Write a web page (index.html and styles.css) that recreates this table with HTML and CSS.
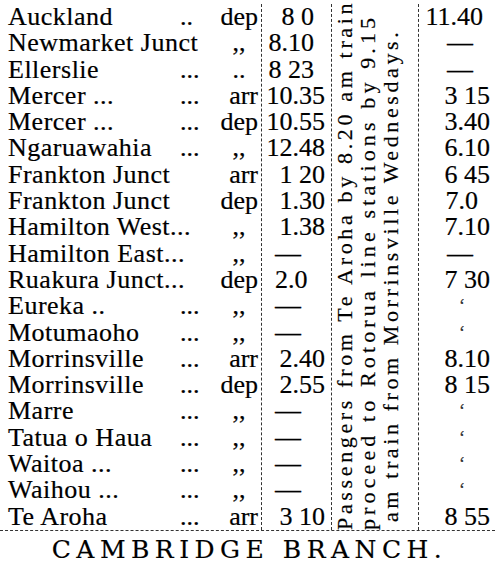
FILE: index.html
```html
<!DOCTYPE html>
<html lang="en">
<head>
<meta charset="utf-8">
<title>Timetable</title>
<link rel="stylesheet" href="styles.css">
</head>
<body>
<div class="page">
  <div class="table">
    <div class="stations">
      <div class="row"><span class="name">Auckland</span><span class="dots">..</span><span class="lab">dep</span></div>
      <div class="row"><span class="name wide">Newmarket Junct</span><span class="lab ditto">,,</span></div>
      <div class="row"><span class="name">Ellerslie</span><span class="dots">...</span><span class="lab ditto">..</span></div>
      <div class="row"><span class="name">Mercer ...</span><span class="dots">...</span><span class="lab">arr</span></div>
      <div class="row"><span class="name">Mercer ...</span><span class="dots">...</span><span class="lab">dep</span></div>
      <div class="row"><span class="name">Ngaruawahia</span><span class="dots">...</span><span class="lab ditto">,,</span></div>
      <div class="row"><span class="name">Frankton Junct</span><span class="dots"></span><span class="lab">arr</span></div>
      <div class="row"><span class="name">Frankton Junct</span><span class="dots"></span><span class="lab">dep</span></div>
      <div class="row"><span class="name">Hamilton West...</span><span class="dots"></span><span class="lab ditto">,,</span></div>
      <div class="row"><span class="name">Hamilton East...</span><span class="dots"></span><span class="lab ditto">,,</span></div>
      <div class="row"><span class="name wide">Ruakura Junct...</span><span class="lab">dep</span></div>
      <div class="row"><span class="name">Eureka ..</span><span class="dots">...</span><span class="lab ditto">,,</span></div>
      <div class="row"><span class="name">Motumaoho</span><span class="dots">...</span><span class="lab ditto">,,</span></div>
      <div class="row"><span class="name">Morrinsville</span><span class="dots">...</span><span class="lab">arr</span></div>
      <div class="row"><span class="name">Morrinsville</span><span class="dots">...</span><span class="lab">dep</span></div>
      <div class="row"><span class="name">Marre</span><span class="dots">...</span><span class="lab ditto">,,</span></div>
      <div class="row"><span class="name">Tatua o Haua</span><span class="dots">...</span><span class="lab ditto">,,</span></div>
      <div class="row"><span class="name">Waitoa ...</span><span class="dots">...</span><span class="lab ditto">,,</span></div>
      <div class="row"><span class="name">Waihou ...</span><span class="dots">...</span><span class="lab ditto">,,</span></div>
      <div class="row"><span class="name">Te Aroha</span><span class="dots">...</span><span class="lab">arr</span></div>
    </div>
    <div class="times">
      <div class="cell shift">8 0</div>
      <div class="cell shift">8.10</div>
      <div class="cell shift">8 23</div>
      <div class="cell">10.35</div>
      <div class="cell">10.55</div>
      <div class="cell">12.48</div>
      <div class="cell">1 20</div>
      <div class="cell">1.30</div>
      <div class="cell">1.38</div>
      <div class="cell left">—</div>
      <div class="cell left">2.0</div>
      <div class="cell left">—</div>
      <div class="cell left">—</div>
      <div class="cell">2.40</div>
      <div class="cell">2.55</div>
      <div class="cell left">—</div>
      <div class="cell left">—</div>
      <div class="cell left">—</div>
      <div class="cell left">—</div>
      <div class="cell">3 10</div>
    </div>
    <div class="note">
      <div class="note-text">
        <span class="l1">Passengers from Te Aroha by 8.20 am train</span>
        <span class="l2">proceed to Rotorua line stations by 9.15</span>
        <span class="l3">am train from Morrinsville Wednesdays.</span>
      </div>
    </div>
    <div class="times2">
      <div class="cell shift">11.40</div>
      <div class="cell dash">—</div>
      <div class="cell dash">—</div>
      <div class="cell">3 15</div>
      <div class="cell">3.40</div>
      <div class="cell">6.10</div>
      <div class="cell">6 45</div>
      <div class="cell shift2">7.0</div>
      <div class="cell">7.10</div>
      <div class="cell dash">—</div>
      <div class="cell">7 30</div>
      <div class="cell mark">‘</div>
      <div class="cell mark">‘</div>
      <div class="cell">8.10</div>
      <div class="cell">8 15</div>
      <div class="cell mark">ʻ</div>
      <div class="cell mark">‘</div>
      <div class="cell mark">‘</div>
      <div class="cell mark">ʻ</div>
      <div class="cell">8 55</div>
    </div>
  </div>
  <div class="title">CAMBRIDGE BRANCH.</div>
</div>
</body>
</html>
```

FILE: styles.css
```css
html, body {
  margin: 0;
  padding: 0;
  background: #fff;
}

.page {
  width: 495px;
  height: 580px;
  overflow: hidden;
  font-family: "Liberation Serif", "Times New Roman", serif;
  color: #000;
  -webkit-text-stroke: 0.2px #000;
}

.table {
  display: flex;
  padding-top: 4px;
  border-bottom: 1px dashed #333;
}

.stations {
  width: 261px;
  flex: none;
  padding-left: 8px;
  box-sizing: border-box;
}

.row {
  display: grid;
  grid-template-columns: 172px 38px 40px;
  height: 26.3px;
  line-height: 26.3px;
  font-size: 26px;
  white-space: nowrap;
}

.name {
  letter-spacing: 0.5px;
}

.name.wide {
  grid-column: span 2;
}

.dots {
  text-align: left;
}

.lab {
  text-align: right;
  grid-column: 3;
}

.lab.ditto {
  text-align: center;
  padding-left: 2px;
}

.times {
  width: 69px;
  flex: none;
  border-left: 1px dashed #333;
}

.cell {
  height: 26.3px;
  line-height: 26.3px;
  font-size: 26px;
  white-space: nowrap;
  text-align: right;
}

.times .cell {
  padding-right: 6px;
}

.times .cell.shift {
  padding-right: 17px;
}

.times .cell.left {
  text-align: left;
  padding-left: 13px;
}

.note {
  width: 88px;
  flex: none;
  border-left: 1px dashed #333;
  border-right: 1px dashed #333;
  display: flex;
  align-items: flex-start;
  padding-left: 1px;
  box-sizing: border-box;
}

.note-text {
  writing-mode: vertical-rl;
  transform: rotate(180deg);
  height: 526px;
  font-size: 22px;
  line-height: 23px;
  white-space: nowrap;
  overflow: visible;
}

.note-text span {
  display: block;
}

.l1 { letter-spacing: 3.65px; }
.l2 { letter-spacing: 4.12px; }
.l3 { letter-spacing: 3.6px; padding-inline-start: 8px; }

.times2 {
  flex: 1;
}

.times2 .cell {
  padding-right: 5px;
}

.times2 .cell.shift {
  padding-right: 12px;
}

.times2 .cell.shift2 {
  padding-right: 17px;
}

.times2 .cell.dash {
  text-align: left;
  padding-left: 28px;
}

.times2 .cell.mark {
  text-align: left;
  padding-left: 40px;
  font-size: 18px;
  color: #333;
}

.title {
  font-family: "DejaVu Serif", "Liberation Serif", serif;
  font-size: 25px;
  letter-spacing: 5.5px;
  text-align: center;
  line-height: 36px;
  margin-top: 1px;
  padding-left: 4px;
}
```
